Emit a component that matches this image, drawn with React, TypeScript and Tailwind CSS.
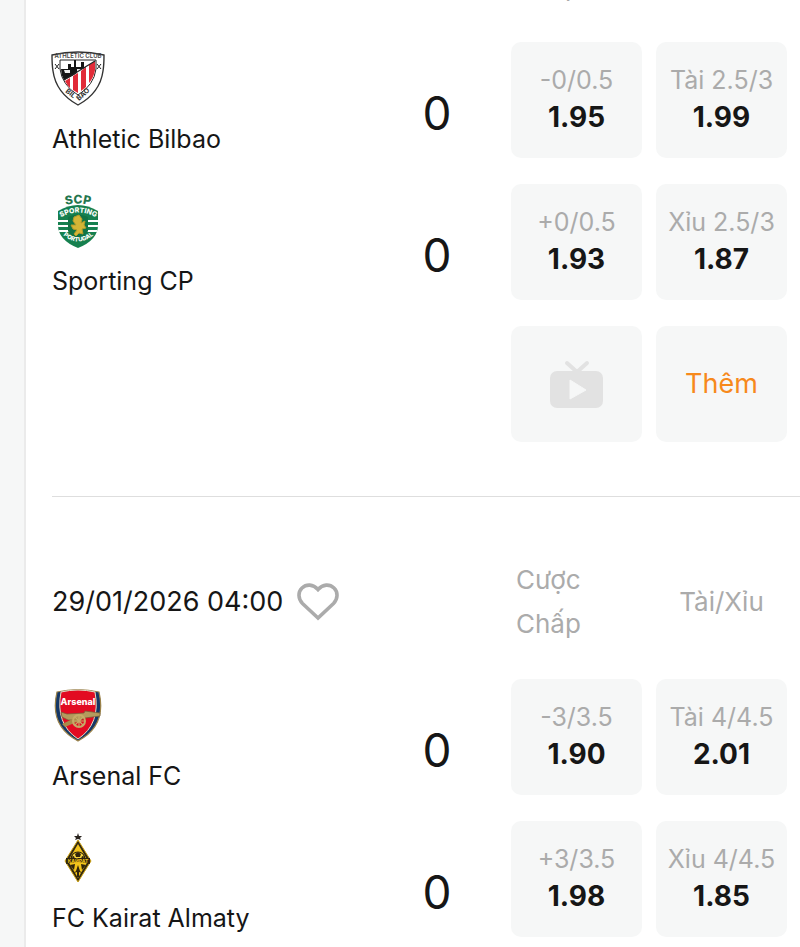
import React from "react";

type Market = { label: string; odds: string };
type Team = { name: string; score: number; crest: React.ReactNode; handicap: Market; total: Market };

function Bilbao() {
  return (
    <svg viewBox="0 0 56 56" className="size-14" role="img" aria-label="Athletic Bilbao">
      <path d="M2 5Q28-1 54 5Q54 15 53 21Q50 43 28 55Q6 43 3 21Q2 15 2 5Z" fill="#fff" stroke="#333" strokeWidth="1.4" />
      <path d="M10 10H46V19Q44 35 28 45Q12 35 10 19Z" fill="#fff" stroke="#222" strokeWidth="1" />
      <path d="M11 19H18V14H21V17H24V10H26V17H31V12H34V17H42L14 30Q11 25 11 19Z" fill="#151515" />
      <path d="M14 20H20V23H15ZM27 19H34V22L27 25Z" fill="#eee" />
      <path d="M45 11V20Q43 34 28 44Q18 38 15 31Z" fill="#fff" />
      <g fill="#e12b38">
        <path d="M39 15L45 11V20Q44 27 39 33Z" />
        <path d="M31 21L36 17V37L31 41Z" />
        <path d="M23 26L28 23V43L23 40Z" />
        <path d="M15 31L20 28V38Q17 35 15 31Z" />
      </g>
      <path d="M14 30L45 11" stroke="#222" strokeWidth="1.2" />
      <path d="M5 14L9 19M9 14L5 19M47 14L51 19M51 14L47 19" stroke="#222" strokeWidth="1" />
      <text x="28" y="8" textAnchor="middle" fontFamily="Inter, sans-serif" fontSize="6" fontWeight="600" fill="#444">ATHLETIC CLUB</text>
      <g fontFamily="Inter, sans-serif" fontSize="7" fontWeight="700" fill="#333">
        <text transform="translate(15 42) rotate(38)">BIL</text>
        <text transform="translate(29 51) rotate(-42)">BAO</text>
      </g>
    </svg>
  );
}

function Sporting() {
  return (
    <svg viewBox="0 0 56 56" className="size-14 overflow-visible" role="img" aria-label="Sporting CP">
      <defs>
        <clipPath id="sporting-shield">
          <path d="M8 19Q28 7 48 19V33Q48 48 28 56Q8 48 8 33Z" />
        </clipPath>
        <path id="sporting-top" d="M10 26Q28 15 47 26" />
        <path id="sporting-bottom" d="M10 40Q28 59 47 40" />
        <path id="sporting-scp" d="M11 15Q28 8 45 15" />
      </defs>
      <g clipPath="url(#sporting-shield)">
        <path d="M0 0H56V56H0Z" fill="#16804f" />
        <path d="M7 29H49M7 34H49M7 39H49" stroke="#fff" strokeWidth="2" />
      </g>
      <path d="M18 25Q28 20 38 25V39Q36 44 28 48Q20 44 18 39Z" fill="#117344" />
      <path d="M24 25L29 23L32 27L31 31L35 29L34 33L36 36L32 37L33 42L29 41L26 44L24 42L27 38L23 37L21 33L26 33L23 29Z" fill="#d4b536" stroke="#b39b29" strokeWidth="1" strokeLinejoin="round" />
      <g fontFamily="Inter, sans-serif" fontWeight="800" textAnchor="middle">
        <text fontSize="12" fill="#23754e"><textPath href="#sporting-scp" startOffset="50%">SCP</textPath></text>
        <text fontSize="7" fill="#fff"><textPath href="#sporting-top" startOffset="50%">SPORTING</textPath></text>
        <text fontSize="6" fill="#fff"><textPath href="#sporting-bottom" startOffset="50%">PORTUGAL</textPath></text>
      </g>
    </svg>
  );
}

function Arsenal() {
  return (
    <svg viewBox="0 0 56 56" className="size-14" role="img" aria-label="Arsenal FC">
      <path d="M7 5Q28 0 49 5Q57 39 28 54Q-1 39 7 5Z" fill="#153766" stroke="#9c834a" strokeWidth="1.2" />
      <path d="M11 5Q28 1 45 5Q51 37 28 52Q5 37 11 5Z" fill="#e20b22" stroke="#e8dcc4" strokeWidth="1" />
      <text x="28" y="18" textAnchor="middle" fontFamily="Inter, sans-serif" fontSize="9" fontWeight="800" fill="#fff">Arsenal</text>
      <path d="M11 25L17 27L34 26L35 24L50 26V29L35 31L30 33H18L12 30Z" fill="#b49b5d" stroke="#725d38" strokeWidth=".7" />
      <path d="M27 30L12 37L15 40L29 34Z" fill="#a88b4b" />
      <circle cx="29" cy="34" r="6" fill="none" stroke="#c6ab67" strokeWidth="2" />
      <path d="M29 28V40M23 34H35M25 30L33 38M33 30L25 38" stroke="#c6ab67" strokeWidth="1.2" />
    </svg>
  );
}

function Kairat() {
  return (
    <svg viewBox="0 -3 56 56" className="size-14" role="img" aria-label="FC Kairat Almaty">
      <path d="M28 1L29 4H32L30 6L31 8L28 7L25 8L26 6L24 4H27Z" fill="#29231e" />
      <path d="M28 8L41 29L28 50L15 29Z" fill="#332911" stroke="#d1a614" strokeWidth="1" />
      <path d="M28 12L38 29L28 46L18 29Z" fill="#f3c41b" />
      <path d="M21 27Q22 20 28 20Q34 20 35 27Z" fill="#f7d742" stroke="#30250c" strokeWidth="1.2" />
      <path d="M25 22L28 20L31 22L30 25H26ZM21 25L24 24L25 27M35 25L32 24L31 27" fill="#30250c" />
      <path d="M16 26H40V32Q28 28 16 32Z" fill="#30250c" />
      <text x="28" y="31" textAnchor="middle" fontFamily="Inter, sans-serif" fontSize="5" fontWeight="700" fill="#f3c41b">КАЙРАТ</text>
      <path d="M20 33L25 32L24 38ZM36 33L31 32L32 38ZM26 39L28 33L30 39L32 41L29 40V45H27V40L24 41Z" fill="#30250c" />
    </svg>
  );
}

const card = "flex h-[116px] w-[131px] shrink-0 flex-col items-center rounded-[10px] bg-[#f6f7f7]";

function OddsButton({ label, odds }: Market) {
  return (
    <button type="button" className={`${card} pt-5`}>
      <span className="text-[25px] leading-9 whitespace-nowrap text-[#ababab]">{label}</span>
      <span className="text-[28px] leading-[38px] font-bold">{odds}</span>
    </button>
  );
}

function TeamRow({ team }: { team: Team }) {
  return (
    <div className="flex gap-[14px]">
      <div className="min-w-0 flex-1 pt-2">
        <div className="-ml-0.5">{team.crest}</div>
        <div className="mt-4 text-[25px] leading-[34px] whitespace-nowrap">{team.name}</div>
      </div>
      <div className="w-[120px] pt-12 text-center text-[46px] leading-[46px]">{team.score}</div>
      <OddsButton {...team.handicap} />
      <OddsButton {...team.total} />
    </div>
  );
}

function Heart() {
  return (
    <svg viewBox="0 0 42 38" className="h-[38px] w-[42px]" fill="none" stroke="#ababab" strokeWidth="3.6" strokeLinejoin="miter" aria-hidden="true">
      <path d="M21 35L5.500 20.500C1 16 .8 9 5 5C9.500 .8 16 1 21 6.500C26 1 32.500 .8 37 5C41.200 9 41 16 36.500 20.500Z" />
    </svg>
  );
}

function Tv() {
  return (
    <svg viewBox="0 0 54 48" className="h-12 w-[54px]" aria-hidden="true">
      <path d="M17 3L27 12L37 3" fill="none" stroke="#e2e2e2" strokeWidth="4" strokeLinecap="round" />
      <rect x="0" y="11" width="53" height="37" rx="7" fill="#e2e2e2" />
      <path d="M20 20L36 30L20 39Z" fill="#f6f7f7" stroke="#f6f7f7" strokeLinejoin="round" />
    </svg>
  );
}

const first: Team[] = [
  { name: "Athletic Bilbao", score: 0, crest: <Bilbao />, handicap: { label: "-0/0.5", odds: "1.95" }, total: { label: "Tài 2.5/3", odds: "1.99" } },
  { name: "Sporting CP", score: 0, crest: <Sporting />, handicap: { label: "+0/0.5", odds: "1.93" }, total: { label: "Xỉu 2.5/3", odds: "1.87" } },
];

const second: Team[] = [
  { name: "Arsenal FC", score: 0, crest: <Arsenal />, handicap: { label: "-3/3.5", odds: "1.90" }, total: { label: "Tài 4/4.5", odds: "2.01" } },
  { name: "FC Kairat Almaty", score: 0, crest: <Kairat />, handicap: { label: "+3/3.5", odds: "1.98" }, total: { label: "Xỉu 4/4.5", odds: "1.85" } },
];

export default function App() {
  return (
    <div className="flex min-h-screen overflow-hidden bg-[#f6f7f7] font-['Inter','Liberation_Sans',sans-serif] text-[#161616]">
      <main className="ml-6 min-w-0 flex-1 border-l-2 border-[#ebebeb] bg-white pb-[10px] pl-[26px]">
        <section className="flex flex-col gap-[26px] border-b border-[#dedede] pr-[13px] pb-[54px]">
          {/* Column heading of the first match, scrolled past the top edge */}
          <header className="-mt-[35px] mb-[7px] flex justify-end gap-[14px] text-[26px] leading-[44px] text-[#ababab]">
            <div className="w-[131px] pl-[5px]">Chấp</div>
            <div className="w-[131px]" />
          </header>
          {first.map((team) => (
            <TeamRow key={team.name} team={team} />
          ))}
          <div className="flex justify-end gap-[14px]">
            <button type="button" aria-label="TV" className={`${card} justify-center`}>
              <Tv />
            </button>
            <button type="button" className={`${card} justify-center text-[27px] text-[#f7891b]`}>
              Thêm
            </button>
          </div>
        </section>

        <section className="flex flex-col gap-[26px] pt-[61px] pr-[13px]">
          <header className="mb-[7px] flex items-center gap-[14px]">
            <div className="flex min-w-0 flex-1 items-center gap-[14px]">
              <time className="text-[27px] leading-9 whitespace-nowrap">29/01/2026 04:00</time>
              <button type="button" aria-label="Favorite">
                <Heart />
              </button>
            </div>
            <div className="w-[131px] pl-[5px] text-[26px] leading-[44px] text-[#ababab]">
              Cược
              <br />
              Chấp
            </div>
            <div className="w-[131px] text-center text-[26px] leading-[44px] text-[#ababab]">Tài/Xỉu</div>
          </header>
          {second.map((team) => (
            <TeamRow key={team.name} team={team} />
          ))}
        </section>
      </main>
    </div>
  );
}
